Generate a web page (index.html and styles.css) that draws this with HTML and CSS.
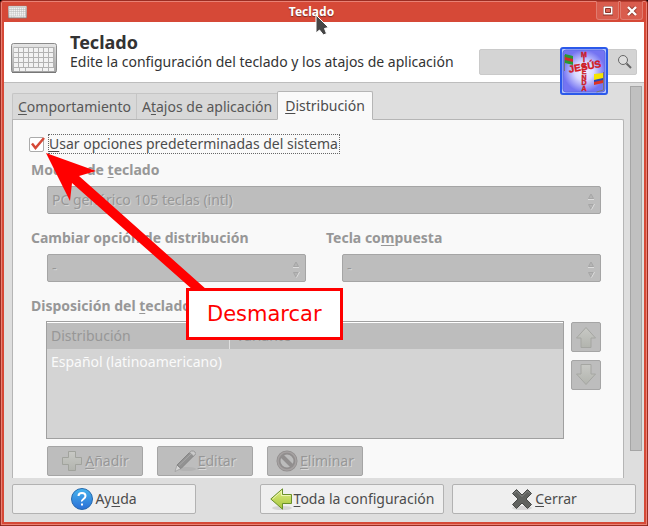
FILE: index.html
```html
<!DOCTYPE html>
<html lang="es">
<head>
<meta charset="utf-8">
<meta name="viewport" content="width=device-width, initial-scale=1">
<title>Teclado</title>
<link rel="stylesheet" href="styles.css">
</head>
<body>
<svg class="defs" width="0" height="0" aria-hidden="true">
  <defs>
    <linearGradient id="metal" x2="0" y2="1"><stop stop-color="#e6e6e6"/><stop offset="1" stop-color="#a4a4a4"/></linearGradient>
    <linearGradient id="blue" x2="0" y2="1"><stop stop-color="#46b4ee"/><stop offset="1" stop-color="#2a6fd6"/></linearGradient>
    <linearGradient id="green" x2="0" y2="1"><stop stop-color="#e2ef86"/><stop offset="1" stop-color="#a3c43a"/></linearGradient>
    <linearGradient id="faded" x2="0" y2="1"><stop stop-color="#c8c9c5"/><stop offset="1" stop-color="#b2b4ae"/></linearGradient>
    <radialGradient id="glow"><stop stop-color="#f4f3ff"/><stop offset=".45" stop-color="#d9d8ff"/><stop offset="1" stop-color="#7474f2"/></radialGradient>
    <symbol id="keyboard" viewBox="0 0 46 30">
      <rect x=".5" y=".5" width="45" height="29" rx="2" fill="url(#metal)" stroke="#8b8b8b"/>
      <path d="M1 29.5h44" stroke="#777"/>
      <rect x="2.500" y="4" width="41" height="24" fill="#b2b2b2"/>
      <g fill="none" stroke="#f2f2f2" stroke-width="4">
        <path d="M3 7h40M3 12h40M3 17h40M3 22h40" stroke-dasharray="4 1"/>
      </g>
      <path d="M3 25h5v3H3zM9 25h5v3H9zM15 25h16v3H15zM32 25h5v3h-5zM38 25h5v3h-5z" fill="#f2f2f2"/>
    </symbol>
    <symbol id="spin" viewBox="0 0 8 18">
      <path d="M1.500 6.500 4 2l2.500 4.500z" fill="#b5b5b5" stroke="#a6a6a6"/>
      <path d="M1.500 12.500 4 17l2.500-4.500z" fill="#b5b5b5" stroke="#a6a6a6"/>
      <path d="M1 7.500h6M4.500 17.500 7.500 12" stroke="#ddd" fill="none"/>
    </symbol>
  </defs>
</svg>
<div class="window">
  <div class="titlebar">
    <svg class="mini-keyboard" aria-hidden="true"><use href="#keyboard"/></svg>
    <div class="window-title">Teclado</div>
    <div class="window-buttons">
      <button type="button" aria-label="Maximizar"><svg viewBox="0 0 10 10"><path d="M0 0h10v9H0z" fill="#fff" stroke="#8c352b"/><path d="M2.500 2.500h5v4h-5z" fill="#d96354" stroke="#8c352b"/></svg></button>
      <button type="button" aria-label="Cerrar ventana"><svg viewBox="0 0 10 10"><path d="m1.500 1.500 7 7m0-7-7 7" stroke="#963e34" stroke-width="4"/><path d="m1 1 8 8m0-8-8 8" stroke="#fff" stroke-width="2.400"/></svg></button>
    </div>
    <svg class="cursor" viewBox="0 0 15 24" aria-hidden="true"><path d="M1 1v18l3.500-3 4 5 3-1.500-2-5 4-1z" fill="#464646" stroke="#fff"/></svg>
  </div>

  <header class="header">
    <svg class="app-icon" aria-hidden="true"><use href="#keyboard"/></svg>
    <div class="heading">
      <h1>Teclado</h1>
      <p>Edite la configuración del teclado y los atajos de aplicación</p>
    </div>
    <div class="search">
      <input type="search" aria-label="Buscar">
      <svg class="search-icon" viewBox="0 0 16 16" aria-hidden="true"><circle cx="6" cy="6" r="4.500" fill="#ddd" stroke="#666"/><path d="m9.500 9.500 4.500 4.500" stroke="#666" stroke-width="2"/></svg>
      <svg class="badge" viewBox="0 0 48 48" role="img" aria-label="Jesús Misenda">
        <rect x="1" y="1" width="46" height="46" rx="2" fill="#b8c8fb" stroke="#2b59ea" stroke-width="2"/>
        <rect x="3" y="3" width="42" height="42" rx="3" fill="url(#glow)" stroke="#5e6ce6"/>
        <path d="M4.500 8v16M43.500 25v18l-7 2" fill="none" stroke="#777"/>
        <path d="m5 7 8 2v9l-8-2z" fill="#279a32"/><path d="m5 10 8 2v3l-8-2z" fill="#d32b2b"/>
        <path d="m34 30 9-3v9l-9 2z" fill="#d32"/><path d="m34 30 9-3v6l-9 2z" fill="#2846b4"/><path d="m34 27 9-1v5l-9 2z" fill="#f5e400"/>
        <g fill="#e01818" stroke="#c02030" stroke-width=".4" class="badge-text" text-anchor="middle">
          <text x="24" y="10">M</text><text x="24" y="15">I</text><text x="24" y="21">S</text><text x="24" y="27">E</text><text x="24" y="33">N</text><text x="24" y="38">D</text><text x="24" y="44">A</text>
          <text x="25" y="23" class="badge-name" transform="rotate(-10 25 20)">JESÚS</text>
        </g>
      </svg>
    </div>
  </header>

  <main class="content">
    <div class="notebook">
      <div class="tabs" role="tablist">
        <button type="button" role="tab" aria-selected="false"><u>C</u>omportamiento</button>
        <button type="button" role="tab" aria-selected="false">A<u>t</u>ajos de aplicación</button>
        <button type="button" role="tab" aria-selected="true"><u>D</u>istribución</button>
      </div>
      <div class="panel" role="tabpanel">
        <div class="check">
          <input type="checkbox" id="defaults" checked>
          <svg class="tick" viewBox="0 0 16 16" aria-hidden="true"><path d="M3 7.500 6.500 12 15 2" fill="none" stroke="#d64937" stroke-width="2.500"/></svg>
          <label for="defaults"><u>U</u>sar opciones predeterminadas del sistema</label>
        </div>

        <div class="field">
          <label for="model">Modelo de <u>t</u>eclado</label>
          <div class="select"><select id="model" disabled><option>PC genérico 105 teclas (intl)</option></select><svg aria-hidden="true"><use href="#spin"/></svg></div>
        </div>

        <div class="pair">
          <div class="field">
            <label for="change">Cambiar opción de distribución</label>
            <div class="select"><select id="change" disabled><option>-</option></select><svg aria-hidden="true"><use href="#spin"/></svg></div>
          </div>
          <div class="field">
            <label for="compose">Tecla co<u>m</u>puesta</label>
            <div class="select"><select id="compose" disabled><option>-</option></select><svg aria-hidden="true"><use href="#spin"/></svg></div>
          </div>
        </div>

        <h2 id="layout-title">Disposición del <u>t</u>eclado</h2>
        <div class="layouts">
          <div class="list">
            <table aria-labelledby="layout-title">
              <thead><tr><th>Distribución</th><th>Variante</th></tr></thead>
              <tbody><tr><td>Español (latinoamericano)</td><td></td></tr></tbody>
            </table>
          </div>
          <div class="order">
            <button type="button" disabled aria-label="Subir"><svg viewBox="0 0 22 22"><path d="M11 1.500 20.500 12H16v9.500H6V12H1.500z" fill="url(#faded)" stroke="#a5a6a2"/></svg></button>
            <button type="button" disabled aria-label="Bajar"><svg viewBox="0 0 22 22"><path d="M11 20.500 1.500 10H6V.5h10V10h4.500z" fill="url(#faded)" stroke="#a5a6a2"/></svg></button>
          </div>
        </div>
        <div class="edit-actions">
          <button type="button" disabled><svg viewBox="0 0 22 22"><path d="M7.500 1.500h7v6h6v7h-6v6h-7v-6h-6v-7h6z" fill="url(#faded)" stroke="#a1a39d"/></svg><span><u>A</u>ñadir</span></button>
          <button type="button" disabled><svg viewBox="0 0 22 22"><ellipse cx="13" cy="19" rx="9" ry="2" fill="#b3b3b3"/><path d="M1 21.500 3 15 7 18.500z" fill="#d4d4d4" stroke="#999" stroke-width=".7"/><path d="M3 15 15.500 2.500l4 3.500L7 18.500z" fill="#929292" stroke="#858585"/><path d="M5 15.500 17 4" stroke="#a8a8a8"/><path d="m15.500 2.500 2-1.500q2-.5 3.500 1t0 3l-1.500 1z" fill="#c9c9c9" stroke="#999"/></svg><span><u>E</u>ditar</span></button>
          <button type="button" disabled><svg viewBox="0 0 22 22"><circle cx="11" cy="11" r="8.500" fill="#bcbcbc" stroke="#918e8e" stroke-width="4"/><path d="m5 5 12 12" stroke="#918e8e" stroke-width="4"/><circle cx="11" cy="11" r="9" fill="none" stroke="#a5a1a1" stroke-width="1.500"/></svg><span><u>E</u>liminar</span></button>
        </div>
      </div>
    </div>
    <div class="scrollbar" aria-hidden="true"><div class="thumb"></div></div>
  </main>

  <footer class="footer">
    <button type="button"><svg viewBox="0 0 22 22"><circle cx="11" cy="11" r="10.500" fill="url(#blue)" stroke="#2769ad"/><path d="M7.500 8Q7.500 5 11 5t3.500 3Q14.500 9.500 12.500 11T11 13.500" fill="none" stroke="#fff" stroke-width="2"/><path d="M10 15.500h2v2h-2z" fill="#fff"/></svg><span>Ay<u>u</u>da</span></button>
    <button type="button"><svg viewBox="0 0 22 22"><ellipse cx="12" cy="20" rx="10" ry="2" fill="#d5d5d5"/><path d="M.8 11 12.500.8v5.700h9v9h-9v5.700z" fill="url(#green)" stroke="#69902b"/><path d="m2.500 11 9-8v4.500h9" fill="none" stroke="#eef6b4"/></svg><span><u>T</u>oda la configuración</span></button>
    <button type="button"><svg viewBox="0 0 22 22"><ellipse cx="11" cy="20" rx="10" ry="2" fill="#d5d5d5"/><path d="M5.500 1.500 11 7l5.500-5.500 4 4L15 11l5.500 5.500-4 4L11 15l-5.500 5.500-4-4L7 11 1.500 5.500z" fill="#60625f" stroke="#464846" stroke-linejoin="round"/><path d="M3 5.500 5.500 3l5.500 5.500L16.500 3 19 5.500" fill="none" stroke="#868886"/></svg><span><u>C</u>errar</span></button>
  </footer>

  <svg class="pointer" viewBox="0 0 162 140" aria-hidden="true"><path d="M0 0 50 18 33 23 161 137h-14L26 30l-2 18z" fill="red"/></svg>
  <div class="callout">Desmarcar</div>
</div>
</body>
</html>
```
FILE: styles.css
```css
* { box-sizing: border-box; }

body {
  margin: 0;
  background: #000;
  color: #3c3c3c;
  font: 14px/20px "Noto Sans", "Open Sans", sans-serif;
}

button, input, select { font: inherit; color: inherit; margin: 0; }
button { padding: 0; }
h1, h2, p { margin: 0; }
svg { display: block; flex: none; }
u { text-decoration: underline 1px; text-underline-offset: 2px; }
.defs { position: absolute; }

.window {
  position: relative;
  display: flex;
  flex-direction: column;
  height: 100vh;
  min-height: 520px;
  border: 1px solid #9b2d22;
  border-radius: 3px 3px 0 0;
  background: #d64937;
  box-shadow: inset 0 0 0 1px #e98275;
  padding: 0 3px 3px;
}

.titlebar {
  position: relative;
  display: flex;
  flex: none;
  align-items: center;
  height: 21px;
  padding-left: 4px;
}
.mini-keyboard { width: 19px; height: 14px; }
.window-title {
  flex: 1;
  text-align: center;
  color: #fff;
  font-size: 12px;
  font-weight: bold;
  text-shadow: 0 1px 1px #7a2b22;
}
.window-buttons { display: flex; align-self: flex-start; gap: 1px; padding-right: 1px; }
.window-buttons button {
  display: grid;
  place-items: center;
  width: 23px;
  height: 19px;
  border: 1px solid #e07c70;
  border-top-color: #b63d30;
  border-radius: 0 0 3px 3px;
  background: #d95c4d;
}
.window-buttons svg { width: 10px; height: 10px; }
.cursor { position: absolute; z-index: 2; left: 311px; top: 13px; width: 15px; height: 24px; }

.header {
  display: flex;
  flex: none;
  align-items: center;
  height: 61px;
  padding: 0 7px;
  border-bottom: 1px solid #bdbdbd;
  background: #fff;
}
.app-icon { width: 46px; height: 30px; margin-top: 12px; }
.heading { flex: 1; padding-left: 13px; color: #333; white-space: nowrap; }
.heading h1 { font-size: 18px; line-height: 20px; }
.search { position: relative; display: flex; width: 158px; margin-top: 20px; }
.search input {
  width: 100%;
  height: 26px;
  padding: 0 28px 0 6px;
  border: 1px solid #cacaca;
  border-radius: 2px;
  background: #d4d4d4;
}
.search-icon { position: absolute; right: 4px; top: 5px; width: 16px; height: 16px; }
.badge { position: absolute; z-index: 2; left: 81px; top: -2px; width: 48px; height: 48px; }
.badge-text { font: bold 7px "Liberation Sans", sans-serif; }
.badge-name { font-size: 10px; }

.content {
  display: flex;
  flex: 1;
  min-height: 0;
  background: #dedede;
}
.notebook {
  display: flex;
  flex: 1;
  flex-direction: column;
  min-width: 0;
  padding: 8px 6px 0 8px;
}
.tabs { display: flex; flex: none; align-items: flex-end; height: 29px; white-space: nowrap; }
.tabs button {
  height: 27px;
  padding: 0 5px;
  border: 1px solid #c5c5c5;
  border-right: 0;
  border-bottom-color: #b5b5b5;
  background: #d8d8d8;
  color: #575757;
}
.tabs button:first-child { border-radius: 2px 0 0; }
.tabs [aria-selected="true"] {
  z-index: 1;
  height: 29px;
  padding: 0 7px;
  border: 1px solid #b5b5b5;
  border-bottom-color: #f9f9f9;
  border-radius: 2px 2px 0 0;
  background: #f9f9f9;
  color: #4c4c4c;
}
.panel {
  flex: 1;
  min-height: 0;
  margin-top: -1px;
  padding: 14px 22px 0 18px;
  overflow: hidden;
  border: 1px solid #b5b5b5;
  border-bottom: 0;
  border-radius: 0 2px 0 0;
  background: #f9f9f9;
  color: #979797;
}

.check { position: relative; display: flex; align-items: center; margin-left: -2px; color: #4c4c4c; }
.check input {
  appearance: none;
  width: 15px;
  height: 15px;
  border: 1px solid #ababab;
  border-radius: 2px;
  background: #fff;
}
.tick { position: absolute; left: 0; top: 2px; width: 16px; height: 16px; pointer-events: none; }
.check label { margin-left: 4px; padding-right: 1px; border: 1px dotted #666; line-height: 18px; }

.field { display: flex; flex-direction: column; }
.field > label, h2 { font-size: 14px; font-weight: bold; line-height: 20px; }
.check + .field { margin-top: 6px; }
.field .select { margin: 6px 0 0 16px; }
.select { position: relative; }
.select select {
  display: block;
  width: 100%;
  height: 28px;
  padding: 0 24px 0 4px;
  appearance: none;
  border: 1px solid #a5a5a5;
  border-radius: 2px;
  background: #bdbdbd;
  color: #979797;
  opacity: 1;
  text-shadow: 1px 1px #d4d4d4;
}
.select svg { position: absolute; right: 6px; top: 6px; width: 8px; height: 18px; }
.pair { display: grid; grid-template-columns: 1fr 1fr; gap: 20px; margin: 14px 0; }

.layouts { display: flex; gap: 7px; margin: 5px 0 7px 15px; }
.list { flex: 1; height: 118px; border: 1px solid #a0a0a0; background: #d4d4d4; }
.list table { width: 100%; border-spacing: 0; text-align: left; }
.list th { height: 27px; padding: 0 4px; border-top: 1px solid #fff; background: #bdbdbd; font-weight: normal; }
.list th:first-child { width: 183px; border-right: 1px solid #e0e0e0; }
.list th:last-child { padding-left: 6px; }
.list td { height: 26px; padding: 0 4px; background: #d4d4d4; color: #fafafa; white-space: nowrap; }
.order { display: flex; flex-direction: column; gap: 8px; padding-top: 1px; }
.order button, .edit-actions button {
  display: flex;
  align-items: center;
  justify-content: center;
  height: 30px;
  border: 1px solid #a5a5a5;
  border-radius: 2px;
  background: #bdbdbd;
  color: #979797;
}
.order button { width: 30px; }
.order svg, .edit-actions svg, .footer svg { width: 22px; height: 22px; }
.edit-actions { display: flex; gap: 14px; margin-left: 16px; }
.edit-actions button { width: 96px; gap: 2px; text-shadow: 1px 1px #d8d8d8; }

.scrollbar { width: 14px; padding: 3px 2px 0 0; }
.thumb { height: 93%; border: 1px solid #a5a5a5; background: #c0c0c0; }

.footer {
  display: grid;
  flex: none;
  grid-template-columns: 184px 1fr 184px 184px;
  gap: 0 8px;
  padding: 6px 8px 8px;
  background: #dedede;
}
.footer button {
  display: flex;
  align-items: center;
  justify-content: center;
  gap: 2px;
  height: 30px;
  border: 1px solid #b2b2b2;
  border-radius: 2px;
  background: #efefef;
  color: #4c4c4c;
  white-space: nowrap;
}
.footer button:nth-child(2) { grid-column: 3; }

.pointer { position: absolute; z-index: 3; left: 45px; top: 152px; width: 162px; height: 140px; pointer-events: none; }
.callout {
  position: absolute;
  z-index: 4;
  left: 185px;
  top: 287px;
  padding: 10px 18px;
  border: 3px solid red;
  background: #fff;
  color: red;
  font: 21px/26px "DejaVu Sans", sans-serif;
}
```
